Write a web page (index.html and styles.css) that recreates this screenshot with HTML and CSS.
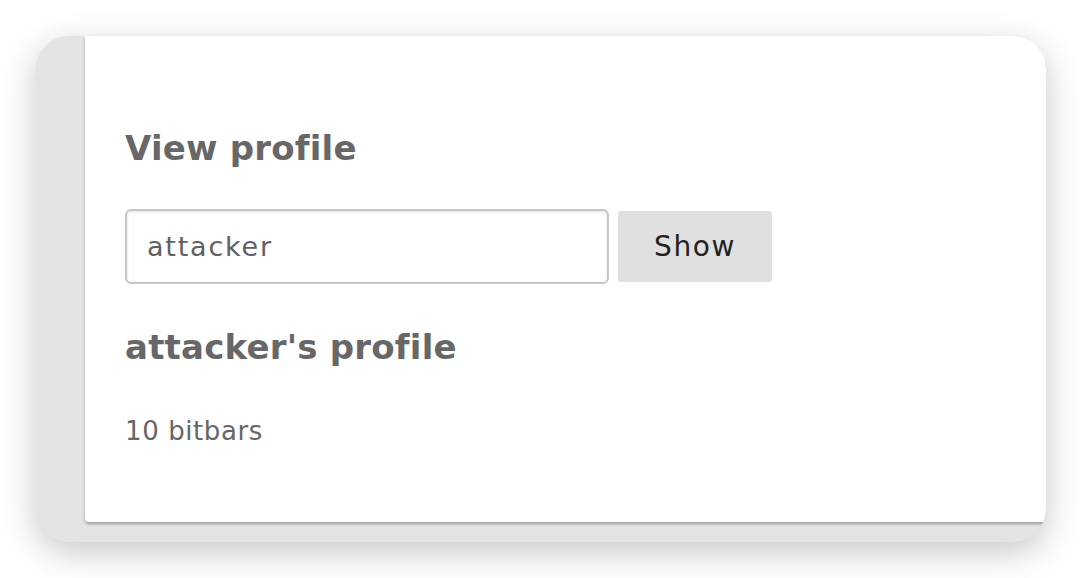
FILE: index.html
```html
<!DOCTYPE html>
<html>
<head>
<meta charset="utf-8">
<link rel="stylesheet" href="styles.css">
</head>
<body>
<div class="window">
  <div class="panel">
    <h2 class="title">View profile</h2>
    <form class="lookup">
      <input class="field" type="text" value="attacker">
      <button class="btn" type="button">Show</button>
    </form>
    <h2 class="title profile-title">attacker's profile</h2>
    <p class="balance">10 bitbars</p>
  </div>
</div>
</body>
</html>
```

FILE: styles.css
```css
html, body {
  margin: 0;
  padding: 0;
  background: #ffffff;
}
body {
  width: 1082px;
  height: 578px;
  overflow: hidden;
  font-family: "DejaVu Sans", "Liberation Sans", sans-serif;
  padding: 36px 0 0 36px;
  box-sizing: border-box;
}
.window {
  width: 1010px;
  height: 506px;
  background: #e4e4e4;
  border-radius: 33px;
  box-shadow: 0 10px 34px rgba(0, 0, 0, 0.22);
  overflow: hidden;
  display: flex;
}
.panel {
  margin-left: 49px;
  flex: 1;
  height: 486px;
  background: #ffffff;
  border-bottom-left-radius: 4px;
  box-shadow: 0 2px 3px rgba(0, 0, 0, 0.3);
  padding: 92px 0 0 40px;
  box-sizing: border-box;
  display: flex;
  flex-direction: column;
  align-items: flex-start;
}
.title {
  margin: 0;
  font-size: 34px;
  line-height: 40px;
  font-weight: bold;
  letter-spacing: 0.2px;
  color: #676767;
}
.lookup {
  margin: 41px 0 0 0;
  display: flex;
  align-items: center;
  gap: 9px;
}
.field {
  width: 484px;
  height: 75px;
  box-sizing: border-box;
  border: 2px solid #c6c6c6;
  border-radius: 6px;
  box-shadow: inset 0 1px 3px rgba(0, 0, 0, 0.12);
  padding: 0 0 0 20px;
  font-family: "DejaVu Sans", "Liberation Sans", sans-serif;
  font-size: 27px;
  letter-spacing: 1.8px;
  color: #606060;
  outline: none;
  background: #fff;
}
.btn {
  width: 154px;
  height: 71px;
  border: none;
  border-radius: 3px;
  background: #e0e0e0;
  font-family: "DejaVu Sans", "Liberation Sans", sans-serif;
  font-size: 28px;
  letter-spacing: 1.6px;
  color: #222222;
  padding: 0;
}
.profile-title {
  margin-top: 43px;
}
.balance {
  margin: 46px 0 0 0;
  font-size: 26px;
  line-height: 36px;
  letter-spacing: 0.6px;
  color: #666666;
}
```
